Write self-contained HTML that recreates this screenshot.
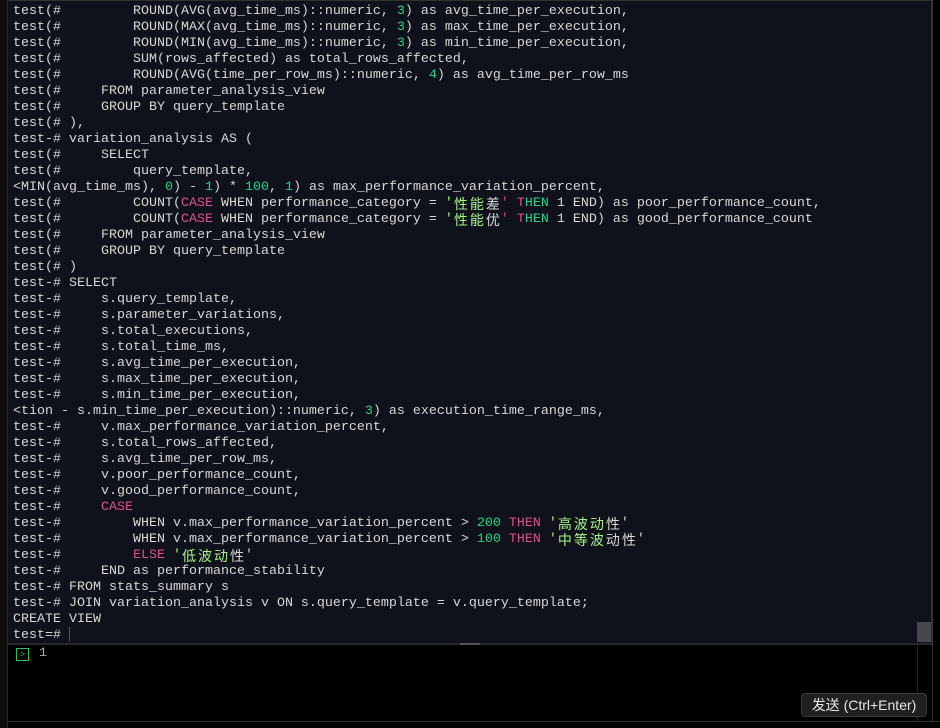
<!DOCTYPE html>
<html><head><meta charset="utf-8"><style>
html,body{margin:0;padding:0;width:940px;height:728px;background:#000;overflow:hidden}
#left{position:absolute;left:0;top:0;width:7px;height:728px;background:#0d0d0d;border-right:1px solid #2c2c2c}
#term{position:absolute;left:8px;top:0;width:924px;height:643px;background:#0f121a;border-top:1px solid #333;border-right:1px solid #333;box-sizing:border-box}
pre{position:absolute;left:13px;top:4px;margin:0;font-family:"Liberation Mono","Noto Sans CJK SC",monospace;font-size:13.33px;line-height:16px;color:#d8d8d8;white-space:pre}
.n{color:#23d18b}.k{color:#e0508a}.s{color:#a6f28c}
.c{display:inline-block;width:16px;text-align:center;font-family:"Noto Sans CJK SC",sans-serif;font-size:14px;line-height:16px;vertical-align:top}
#div{position:absolute;left:8px;top:643px;width:924px;height:2px;background:#26282d}
#handle{position:absolute;left:460px;top:643px;width:20px;height:2px;background:#555}
#thumb{position:absolute;left:917px;top:622px;width:14px;height:20px;background:#45474d}
#cursor{position:absolute;left:69px;top:627px;width:1px;height:14px;background:#d02020}
#icon{position:absolute;left:16px;top:648px;width:10px;height:10px;border:1px solid #2fbf62;color:#2fbf62;font:9px/10px "Liberation Sans",sans-serif;text-align:center;width:11px;height:11px;line-height:11px}
#one{position:absolute;left:39px;top:646px;font:13.33px/16px "Liberation Mono",monospace;color:#aaa}
#vl{position:absolute;left:917px;top:645px;width:1px;height:76px;background:#222}
#rb{position:absolute;left:932px;top:0;width:1px;height:721px;background:#333}
#bot{position:absolute;left:8px;top:721px;width:932px;height:1px;background:#333}
#btn{position:absolute;left:801px;top:693px;width:124px;height:22px;background:#202020;border:1px solid #3a3a3a;border-radius:4px;color:#e8e8e8;font:14px/22px "Liberation Sans","Noto Sans CJK SC",sans-serif;text-align:center;box-sizing:content-box}
</style></head><body>
<div id="left"></div>
<div id="term"></div>
<pre>test(#         ROUND(AVG(avg_time_ms)::numeric, <span class="n">3</span>) as avg_time_per_execution,
test(#         ROUND(MAX(avg_time_ms)::numeric, <span class="n">3</span>) as max_time_per_execution,
test(#         ROUND(MIN(avg_time_ms)::numeric, <span class="n">3</span>) as min_time_per_execution,
test(#         SUM(rows_affected) as total_rows_affected,
test(#         ROUND(AVG(time_per_row_ms)::numeric, <span class="n">4</span>) as avg_time_per_row_ms
test(#     FROM parameter_analysis_view
test(#     GROUP BY query_template
test(# ),
test-# variation_analysis AS (
test(#     SELECT
test(#         query_template,
&lt;MIN(avg_time_ms), <span class="n">0</span>) - <span class="n">1</span>) * <span class="n">100</span>, <span class="n">1</span>) as max_performance_variation_percent,
test(#         COUNT(<span class="k">CASE</span> WHEN performance_category = <span class="s">'<span class="c">性</span><span class="c">能</span></span><span class="c">差</span><span class="k">'</span> <span class="k">T</span><span class="n">HEN</span> 1 END) as poor_performance_count,
test(#         COUNT(<span class="k">CASE</span> WHEN performance_category = <span class="s">'<span class="c">性</span><span class="c">能</span></span><span class="c">优</span><span class="k">'</span> <span class="k">T</span><span class="n">HEN</span> 1 END) as good_performance_count
test(#     FROM parameter_analysis_view
test(#     GROUP BY query_template
test(# )
test-# SELECT
test-#     s.query_template,
test-#     s.parameter_variations,
test-#     s.total_executions,
test-#     s.total_time_ms,
test-#     s.avg_time_per_execution,
test-#     s.max_time_per_execution,
test-#     s.min_time_per_execution,
&lt;tion - s.min_time_per_execution)::numeric, <span class="n">3</span>) as execution_time_range_ms,
test-#     v.max_performance_variation_percent,
test-#     s.total_rows_affected,
test-#     s.avg_time_per_row_ms,
test-#     v.poor_performance_count,
test-#     v.good_performance_count,
test-#     <span class="k">CASE</span>
test-#         WHEN v.max_performance_variation_percent &gt; <span class="n">200</span> <span class="k">THEN</span> <span class="s">'<span class="c">高</span><span class="c">波</span><span class="c">动</span></span><span class="c">性</span>'
test-#         WHEN v.max_performance_variation_percent &gt; <span class="n">100</span> <span class="k">THEN</span> <span class="s">'<span class="c">中</span><span class="c">等</span><span class="c">波</span></span><span class="c">动</span><span class="c">性</span>'
test-#         <span class="k">ELSE</span> <span class="s">'<span class="c">低</span><span class="c">波</span><span class="c">动</span></span><span class="c">性</span>'
test-#     END as performance_stability
test-# FROM stats_summary s
test-# JOIN variation_analysis v ON s.query_template = v.query_template;
CREATE VIEW
test=# </pre>
<div id="cursor"></div>
<div id="thumb"></div>
<div id="div"></div>
<div id="handle"></div>
<div id="icon">&gt;</div>
<div id="one">1</div>
<div id="vl"></div>
<div id="rb"></div>
<div id="bot"></div>
<div id="btn">发送 (Ctrl+Enter)</div>
</body></html>
